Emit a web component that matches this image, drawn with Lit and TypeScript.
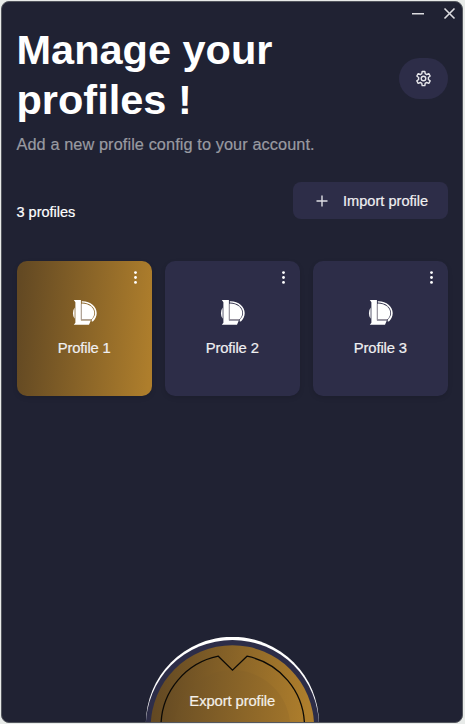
import { LitElement, html, css, svg } from "lit";
import { customElement, property } from "lit/decorators.js";
import { classMap } from "lit/directives/class-map.js";

@customElement("profile-card")
class ProfileCard extends LitElement {
  @property() name = "";
  @property({ type: Boolean }) active = false;

  static styles = css`
    :host { display: block; }
    .card {
      position: relative;
      box-sizing: border-box;
      height: 135px;
      border-radius: 10px;
      background: #2d2d48;
      box-shadow: 0 2px 5px rgba(0, 0, 0, 0.12);
      display: flex;
      flex-direction: column;
      align-items: center;
      padding-top: 38px;
      gap: 13px;
      color: #f0f0f2;
    }
    .card.active { background: linear-gradient(94deg, #634923 3%, #ae7e2c 97%); }
    .menu { position: absolute; top: 9px; right: 14px; width: 5px; height: 15px; }
    .logo { width: 26px; height: 27px; display: block; margin-left: 2px; }
    .name { font-size: 14.8px; line-height: 18px; letter-spacing: -0.15px; white-space: nowrap; -webkit-text-stroke: 0.2px currentColor; }
    .cut { fill: none; stroke: #b5b0b4; stroke-width: 0.8; }
  `;

  render() {
    return html`<div class=${classMap({ card: true, active: this.active })}>
      <svg class="menu" viewBox="0 0 5 15" fill="#fff">
        <circle cx="2.5" cy="2.6" r="1.4" /><circle cx="2.5" cy="7.5" r="1.4" /><circle cx="2.5" cy="12.4" r="1.4" />
      </svg>
      <svg class="logo" viewBox="0 0 26 27" fill="#fff">
        <path d="M2.6 8.4C.4 12 .4 16.3 2.6 19.8Z" />
        <path d="M1.8 1H8.9v20.6h9.9L17 25.8H1.8L3.4 23.8V3.2Z" />
        <path d="M9.8 2.2C18 1.8 24.7 7.2 24.7 14.2c0 3.2-1.5 6.2-3.8 8.2l-1.4-.1.6-2.1c1.8-1.6 3-3.7 3-6.1C23.1 8.4 17.5 3.7 9.8 3.6Z" />
        <path d="M9.7 4.5C17 4.3 22.3 8.8 22.3 14c0 2.4-1 4.5-2.6 6.2H9.7Z" />
        <path class="cut" d="M9.3 5v15.7h9.8" />
      </svg>
      <div class="name">${this.name}</div>
    </div>`;
  }
}

const ring = svg`<path d="M161 98.5A71.7 71.7 0 0 1 218.3 30.2L232.5 44.2 247 30.2A71.7 71.7 0 0 1 304.5 98.5" transform="translate(-145 -11)" />`;

@customElement("app-root")
class AppRoot extends LitElement {
  static styles = css`
    :host {
      display: block;
      width: 465px;
      height: 724px;
      box-sizing: border-box;
      padding: 1px 2px 1px 1px;
      background: #e8ebe9;
      font-family: "Liberation Sans", Arial, sans-serif;
      color: #fff;
      overflow: hidden;
    }
    .window {
      box-sizing: border-box;
      height: 722px;
      border: 1px solid #53565e;
      border-radius: 8px;
      background: #202233;
      overflow: hidden;
      display: flex;
      flex-direction: column;
      padding: 0 14px 0 14.5px;
    }
    .bar { display: flex; justify-content: flex-end; gap: 19px; padding-top: 5px; margin-right: -8px; height: 18px; }
    .bar svg { width: 13px; height: 13px; display: block; }
    .head { display: flex; justify-content: space-between; height: 105px; }
    h1 { margin: 0; font-size: 41.5px; line-height: 50px; font-weight: 700; }
    .gear {
      width: 49px;
      height: 41px;
      margin-top: 33px;
      border-radius: 21px;
      background: #2d2d48;
      display: flex;
      align-items: center;
      justify-content: center;
    }
    .gear svg { width: 17px; height: 17px; }
    .sub { margin: 4px 0 0; font-size: 16.3px; line-height: 20px; letter-spacing: 0.1px; color: #999aa1; white-space: nowrap; -webkit-text-stroke: 0.2px currentColor; }
    .row { display: flex; justify-content: space-between; height: 37px; margin-top: 28px; }
    .count { font-size: 14.5px; line-height: 18px; margin-top: 21px; -webkit-text-stroke: 0.2px currentColor; }
    .import {
      box-sizing: border-box;
      width: 155px;
      height: 37px;
      border-radius: 8px;
      background: #2d2d48;
      display: flex;
      align-items: center;
      padding-left: 23px;
      gap: 15px;
      font-size: 14.6px;
      white-space: nowrap;
      color: #f0f0f2;
      -webkit-text-stroke: 0.2px currentColor;
    }
    .import svg { width: 12px; height: 12px; flex: none; }
    .cards { display: grid; grid-template-columns: repeat(3, 1fr); gap: 12.7px; margin-top: 42px; }
    .export { position: relative; align-self: center; margin-top: auto; width: 175px; height: 85px; }
    .export svg { display: block; width: 175px; height: 86px; }
    .label {
      position: absolute;
      inset: 55px 0 auto;
      text-align: center;
      font-size: 14.8px;
      line-height: 18px;
      letter-spacing: -0.1px;
      color: #f4f0ea;
      -webkit-text-stroke: 0.2px currentColor;
    }
  `;

  render() {
    return html`<div class="window">
      <div class="bar">
        <svg viewBox="0 0 13 13" stroke="#dcdce0" stroke-width="1.6"><path d="M1 6.7h12" /></svg>
        <svg viewBox="0 0 13 13" stroke="#dcdce0" stroke-width="1.6"><path d="M1.5 1.5l10 10M11.5 1.5l-10 10" /></svg>
      </div>
      <div class="head">
        <h1>Manage your<br />profiles !</h1>
        <div class="gear">
          <svg viewBox="0 0 24 24" fill="none" stroke="#e6e6ea" stroke-width="2" stroke-linejoin="round">
            <path d="M9.6 5.2 10.1 2h3.8l.5 3.2 2 1.2 3.1-1.2 1.9 3.3-2.5 2v2.9l2.5 2-1.9 3.4-3.1-1.2-2 1.2-.5 3.2h-3.8l-.5-3.2-2-1.2-3.1 1.2-1.9-3.4 2.5-2v-2.9l-2.5-2 1.9-3.3 3.1 1.2Z" />
            <circle cx="12" cy="12" r="3.2" />
          </svg>
        </div>
      </div>
      <p class="sub">Add a new profile config to your account.</p>
      <div class="row">
        <div class="count">3 profiles</div>
        <div class="import">
          <svg viewBox="0 0 12 12" stroke="#dedee4" stroke-width="1.4"><path d="M6 .5v11M.5 6h11" /></svg>
          <span>Import profile</span>
        </div>
      </div>
      <div class="cards">
        <profile-card name="Profile 1" active></profile-card>
        <profile-card name="Profile 2"></profile-card>
        <profile-card name="Profile 3"></profile-card>
      </div>
      <div class="export">
        <svg viewBox="0 0 175 86">
          <defs>
            <linearGradient id="gold" gradientUnits="userSpaceOnUse" x1="6" y1="40" x2="169" y2="50">
              <stop offset="0.03" stop-color="#634923" /><stop offset="0.97" stop-color="#ae7e2c" />
            </linearGradient>
            <linearGradient id="core" gradientUnits="userSpaceOnUse" x1="6" y1="40" x2="169" y2="50">
              <stop offset="0.03" stop-color="#654b24" /><stop offset="0.97" stop-color="#a6782b" />
            </linearGradient>
          </defs>
          <circle cx="87.4" cy="86.3" r="86.5" fill="#fff" />
          <circle cx="87.4" cy="89.6" r="86.6" fill="#2d2d48" />
          <circle cx="87.4" cy="90" r="81.7" fill="url(#gold)" />
          <circle cx="87.4" cy="91" r="58" fill="url(#core)" />
          <g fill="none" stroke="#0c0a06" stroke-width="1.3">${ring}</g>
        </svg>
        <div class="label">Export profile</div>
      </div>
    </div>`;
  }
}
